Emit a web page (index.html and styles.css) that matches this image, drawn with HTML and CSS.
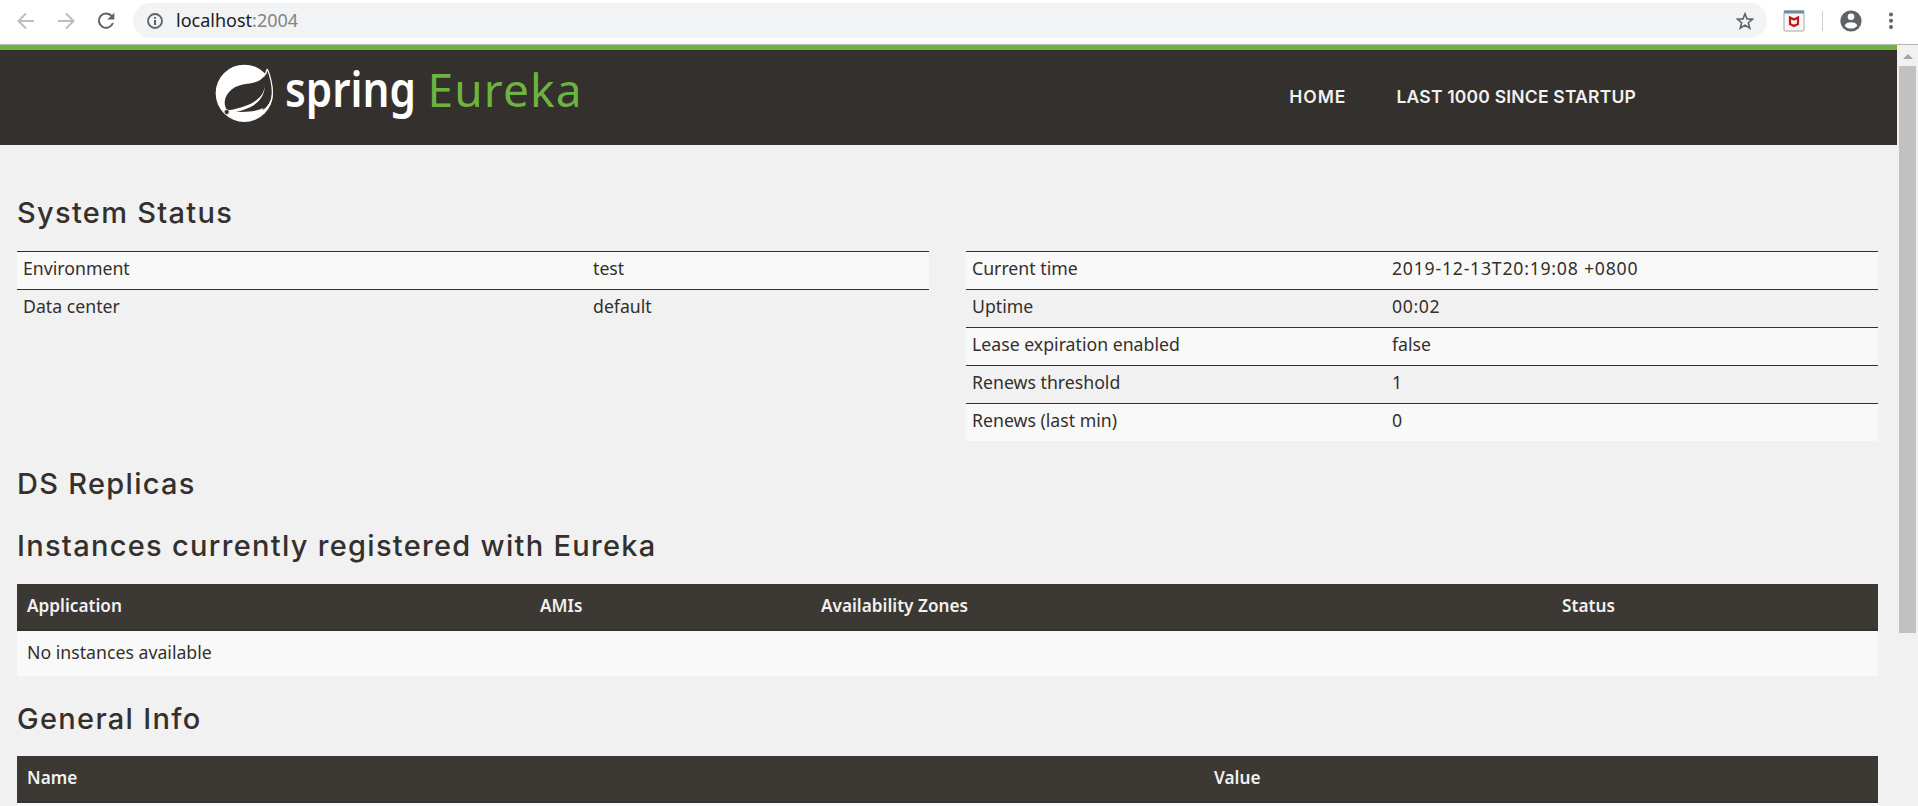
FILE: index.html
```
<!DOCTYPE html>
<html lang="en">
<head>
    <meta charset="UTF-8">
    <meta name="viewport" content="width=device-width, initial-scale=1.0">
    <title>Eureka</title>
    <link rel="stylesheet" href="styles.css">
</head>
<body>
    <!-- browser toolbar -->
    <div class="toolbar">
        <svg class="icon back" width="18" height="18" viewBox="0 0 18 18"><path d="M17 9H2M9 1.5L1.5 9L9 16.5" fill="none" stroke="#babcbe" stroke-width="2"/></svg>
        <svg class="icon forward" width="18" height="18" viewBox="0 0 18 18"><path d="M1 9H16M9 1.5L16.5 9L9 16.5" fill="none" stroke="#babcbe" stroke-width="2"/></svg>
        <svg class="icon reload" width="18" height="18" viewBox="0 0 18 18"><path d="M14.8 4.2A7.2 7.2 0 1 0 15.9 11" fill="none" stroke="#5f6368" stroke-width="2"/><path d="M17.3 0.8V7.6H10.3Z" fill="#5f6368"/></svg>

        <div class="address-bar">
            <svg class="info" width="16" height="16" viewBox="0 0 16 16"><circle cx="8" cy="8" r="7" fill="none" stroke="#5f6368" stroke-width="1.8"/><path d="M7 7H9V12H7ZM7 4H9V5.8H7Z" fill="#5f6368"/></svg>
            <span class="host">localhost</span><span class="port">:2004</span>
            <svg class="star" width="18" height="18" viewBox="0 0 18 18"><path d="M9 1.8L11 6.9L16.6 7.2L12.3 10.7L13.8 16.2L9 13.1L4.2 16.2L5.7 10.7L1.4 7.2L7 6.9Z" fill="none" stroke="#5f6368" stroke-width="1.6"/></svg>
        </div>

        <svg class="extension" width="22" height="22" viewBox="0 0 22 22"><rect x="1" y="1" width="20" height="20" rx="1.5" fill="#f6f6f6" stroke="#bfc1c2" stroke-width="1.4"/><path d="M1 0.5H21V3.5H1Z" fill="#6c8f9e"/><path d="M7 7.5L11 9.5L15 7.5V14L11 16L7 14Z" fill="none" stroke="#c01818" stroke-width="2.2"/></svg>
        <span class="separator"></span>
        <svg class="avatar" width="22" height="22" viewBox="0 0 22 22"><circle cx="11" cy="11" r="10.6" fill="#5f6368"/><circle cx="11" cy="6.8" r="3.3" fill="#fff"/><path d="M4.6 15.4C6 12.8 9 12.2 11 12.2S16 12.8 17.4 15.4C15.8 17.6 13.6 18.6 11 18.6S6.2 17.6 4.6 15.4Z" fill="#fff"/></svg>
        <svg class="dots" width="4" height="18" viewBox="0 0 4 18"><g fill="#5f6368"><circle cx="2" cy="2.5" r="2"/><circle cx="2" cy="8.8" r="2"/><circle cx="2" cy="15" r="2"/></g></svg>
    </div>

    <div class="viewport">
        <div class="page">
            <nav class="navbar">
                <svg class="logo" width="380" height="84" viewBox="0 -8 380 84">
                    <g transform="scale(0.33333)">
                        <circle cx="103" cy="106" r="86" fill="#fff"/>
                        <path d="M172 33C163 62 148 74 112 77C75 80 46 102 44 132C44 144 47 152 53 158C85 166 120 168 148 162C174 150 187 128 187 102C187 74 180 52 172 33Z" fill="#34302d"/>
                        <path d="M172 33C180 52 187 74 187 104C187 128 175 150 153 163" fill="none" stroke="#fff" stroke-width="3.5"/>
                        <path d="M172 33C170 42 166 50 160 56" fill="none" stroke="#fff" stroke-width="4"/>
                        <path d="M164 84C162 112 140 142 56 157L60 164C130 156 164 124 164 84Z" fill="#fff"/>
                        <path d="M60 160C100 164 135 162 160 150L148 174L90 184L54 168Z" fill="#fff"/>
                        <circle cx="50" cy="162" r="7.5" fill="#34302d" stroke="#fff" stroke-width="2"/>
                    </g>
                    <text class="logo-spring" x="75" y="49" textLength="131" lengthAdjust="spacingAndGlyphs">spring</text>
                    <text class="logo-eureka" x="217.5" y="49" textLength="154" lengthAdjust="spacing">Eureka</text>
                </svg>
                <ul class="nav-links">
                    <li class="home">HOME</li>
                    <li>LAST 1000 SINCE STARTUP</li>
                </ul>
            </nav>

            <div class="content">
                <h1 class="first">System Status</h1>
                <div class="row">
                    <table class="status-table">
                        <tr><td class="env-label">Environment</td><td>test</td></tr>
                        <tr><td>Data center</td><td>default</td></tr>
                    </table>
                    <table class="status-table">
                        <tr><td class="time-label">Current time</td><td class="timestamp">2019-12-13T20:19:08 +0800</td></tr>
                        <tr><td>Uptime</td><td class="digits">00:02</td></tr>
                        <tr><td>Lease expiration enabled</td><td>false</td></tr>
                        <tr><td>Renews threshold</td><td>1</td></tr>
                        <tr><td>Renews (last min)</td><td>0</td></tr>
                    </table>
                </div>

                <h1 class="replicas">DS Replicas</h1>
                <h1 class="instances">Instances currently registered with Eureka</h1>
                <table class="data-table">
                    <thead>
                        <tr><th class="col-app">Application</th><th class="col-ami">AMIs</th><th class="col-zone">Availability Zones</th><th>Status</th></tr>
                    </thead>
                    <tbody>
                        <tr><td colspan="4">No instances available</td></tr>
                    </tbody>
                </table>

                <h1 class="general">General Info</h1>
                <table class="data-table">
                    <thead>
                        <tr><th class="col-name">Name</th><th>Value</th></tr>
                    </thead>
                    <tbody>
                        <tr><td></td><td></td></tr>
                    </tbody>
                </table>
            </div>
        </div>

        <div class="scrollbar">
            <div class="arrow"></div>
            <div class="thumb"></div>
        </div>
    </div>
</body>
</html>
```
FILE: styles.css
```
* { margin: 0; padding: 0; box-sizing: border-box; }

body {
    font-family: "Noto Sans", sans-serif;
    font-size: 17.7px;
    line-height: 24px;
    color: #34302d;
    background: #f1f1f1;
    height: 806px;
    overflow: hidden;
}

/* toolbar */
.toolbar {
    display: flex;
    align-items: center;
    height: 45px;
    padding: 0 25px 3px 17px;
    background: #fff;
    border-bottom: 1px solid #b6b4b6;
}

.toolbar svg {
    flex: none;
    display: block;
}

.forward { margin-left: 22px; }
.reload { margin-left: 22px; }

.address-bar {
    display: flex;
    align-items: center;
    flex: 1;
    height: 35px;
    margin-left: 18px;
    padding: 0 13px 0 14px;
    border-radius: 18px;
    background: #f1f3f4;
    font-size: 18px;
}

.host {
    margin-left: 13px;
    color: #202124;
}

.host, .port { padding-bottom: 2px; }
.port { color: #80868b; }
.star { margin-left: auto; }
.extension { margin-left: 16px; }

.separator {
    width: 1px;
    height: 20px;
    margin-left: 17px;
    background: #d0d2d4;
}

.avatar { margin-left: 17px; }
.dots { margin-left: 27px; }

.viewport {
    display: flex;
    height: 761px;
}

.page {
    width: 1897px;
    overflow: hidden;
}

/* header */
.navbar {
    display: flex;
    justify-content: space-between;
    height: 100px;
    padding: 0 261px 0 210px;
    border-top: 5px solid #6db33f;
    background: #34302d;
}

.logo {
    overflow: visible;
}

.logo-spring {
    font-family: "Noto Sans", sans-serif;
    font-size: 48px;
    font-weight: 600;
    fill: #fff;
}

.logo-eureka {
    font-family: "Noto Sans", sans-serif;
    font-size: 46px;
    fill: #6db33f;
}

.nav-links {
    display: flex;
    gap: 50px;
    padding-top: 35px;
    list-style: none;
    font-family: Inter, sans-serif;
    font-size: 17.5px;
    font-weight: 600;
    letter-spacing: 0.2px;
    color: #f1f1f1;
}

.nav-links .home { letter-spacing: 1px; }

/* content */
.content {
    width: 1861px;
    margin-left: 17px;
}

h1 {
    font-family: Inter, sans-serif;
    font-size: 29px;
    font-weight: 500;
    line-height: 34px;
    letter-spacing: 1.3px;
}

.first { padding-top: 51px; margin-bottom: 21px; }
.replicas { margin-top: 26px; }
.instances { margin: 28px 0 21px; }
.general { margin: 26px 0 20px; }

.row {
    display: grid;
    grid-template-columns: 912px 912px;
    justify-content: space-between;
    align-items: start;
}

table {
    width: 100%;
    table-layout: fixed;
    border-collapse: separate;
    border-spacing: 0;
}

.status-table tr:nth-child(odd) { background: #f9f9f9; }

.status-table td {
    height: 38px;
    padding: 0 6px 6px;
    border-top: 1px solid #34302d;
    vertical-align: middle;
}

.env-label { width: 570px; }
.time-label { width: 420px; }
.status-table .timestamp { letter-spacing: 0.75px; }
.status-table .digits { letter-spacing: 0.6px; }

.data-table th {
    height: 47px;
    padding: 0 10px 1px;
    border-bottom: 2px solid #34302d;
    background: #3c3833;
    font-size: 17.2px;
    font-weight: 600;
    text-align: left;
    color: #f1f1f1;
}

.data-table td {
    height: 45px;
    padding: 0 10px 4px;
    background: #f9f9f9;
}

.col-app { width: 513px; }
.col-ami { width: 281px; }
.col-zone { width: 741px; }
.col-name { width: 1187px; }

/* scrollbar */
.scrollbar {
    width: 21px;
    padding: 9px 2px 0;
    background: #f1f1f1;
}

.arrow {
    width: 0;
    margin: 0 auto 7px;
    border-left: 5px solid transparent;
    border-right: 5px solid transparent;
    border-bottom: 5px solid #a3a3a3;
}

.thumb {
    width: 17px;
    height: 567px;
    background: #c1c1c1;
}
```
